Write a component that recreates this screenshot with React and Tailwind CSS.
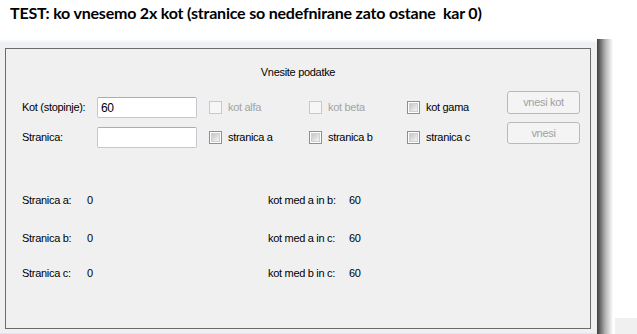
import React from "react";

function Check({ disabled, label }) {
  return (
    <div className="flex items-center gap-[6px]">
      <div
        className={
          disabled
            ? "w-[13px] h-[13px] border border-[#c9c9c9] bg-[#f6f6f6]"
            : "w-[13px] h-[13px] border border-[#8f8f8f] bg-white p-[1px]"
        }
      >
        {!disabled && (
          <div className="w-full h-full bg-gradient-to-br from-[#c6c6c6] to-[#f5f5f5] border border-[#d0d0d0]" />
        )}
      </div>
      <span className={disabled ? "text-[#a3a3a3]" : "text-black"}>{label}</span>
    </div>
  );
}

function Btn({ label, h }) {
  return (
    <div
      className={`w-[73px] ${h} rounded-[3px] border border-[#b7babc] bg-[#f4f4f4] flex items-center justify-center text-[#a0a0a0]`}
    >
      {label}
    </div>
  );
}

function TextBox({ value }) {
  return (
    <div className="w-[100px] h-[21px] rounded-[2px] border border-[#c3c7ce] border-t-[#abadb3] bg-white pl-[3px] flex items-center text-black text-[12px]">
      {value}
    </div>
  );
}

function ResultRow({ l1, v1, l2, v2 }) {
  return (
    <div className="flex items-center h-[14px]">
      <span className="w-[65px]">{l1}</span>
      <span className="w-[181px]">{v1}</span>
      <span className="w-[81px]">{l2}</span>
      <span>{v2}</span>
    </div>
  );
}

export default function App() {
  return (
    <div
      className="w-[637px] h-[334px] bg-white overflow-hidden flex flex-col"
      style={{ fontFamily: '"Liberation Sans", Arial, sans-serif' }}
    >
      <div
        className="h-[40px] pl-[10px] pt-[3px] text-[16px] font-bold text-black leading-[20px] tracking-[-0.2px]"
        style={{ fontFamily: 'Lato, "Open Sans", sans-serif' }}
      >
        TEST: ko vnesemo 2x kot (stranice so nedefnirane zato ostane&nbsp; kar 0)
      </div>
      <div className="flex flex-1">
        <div className="w-[597px] flex flex-col">
          <div className="h-[9px] bg-gradient-to-b from-[#ffffff] via-[#eceef4] to-[#f0f0f0]" />
          <div className="flex-1 bg-[#f0f0f0] pl-[5px] pr-[6px] pb-[4px]">
            <div className="h-[281px] border border-[#6b6b6b] text-[11px] tracking-[-0.3px] text-black flex flex-col">
              <div className="text-center pt-[17px] h-[48px] leading-[13px]">Vnesite podatke</div>
              <div className="flex items-start pl-[16px] h-[20px]">
                <div className="w-[75px] h-[20px] flex items-center">Kot (stopinje):</div>
                <TextBox value="60" />
                <div className="w-[12px]" />
                <div className="w-[100px] h-[20px] flex items-center"><Check disabled label="kot alfa" /></div>
                <div className="w-[98px] h-[20px] flex items-center"><Check disabled label="kot beta" /></div>
                <div className="w-[100px] h-[20px] flex items-center"><Check label="kot gama" /></div>
                <div className="-mt-[6px]"><Btn label="vnesi kot" h="h-[23px]" /></div>
              </div>
              <div className="flex items-start pl-[16px] h-[20px] mt-[10px]">
                <div className="w-[75px] h-[20px] flex items-center">Stranica:</div>
                <TextBox value="" />
                <div className="w-[12px]" />
                <div className="w-[100px] h-[20px] flex items-center"><Check label="stranica a" /></div>
                <div className="w-[98px] h-[20px] flex items-center"><Check label="stranica b" /></div>
                <div className="w-[100px] h-[20px] flex items-center"><Check label="stranica c" /></div>
                <div className="-mt-[5px]"><Btn label="vnesi" h="h-[22px]" /></div>
              </div>
              <div className="pl-[16px] mt-[46px] flex flex-col gap-[24px]">
                <ResultRow l1="Stranica a:" v1="0" l2="kot med a in b:" v2="60" />
                <ResultRow l1="Stranica b:" v1="0" l2="kot med a in c:" v2="60" />
                <div className="-mt-[3px]">
                  <ResultRow l1="Stranica c:" v1="0" l2="kot med b in c:" v2="60" />
                </div>
              </div>
            </div>
          </div>
          <div className="h-[1px] bg-[#e4e6f0]" />
        </div>
        <div className="w-[16px] bg-gradient-to-r from-[#3f3f3f] via-[#b0b0b0] to-white" />
        <div className="flex-1 flex flex-col justify-end">
          <div className="h-[16px] ml-[2px] bg-[#f0f0f0]" />
        </div>
      </div>
    </div>
  );
}
